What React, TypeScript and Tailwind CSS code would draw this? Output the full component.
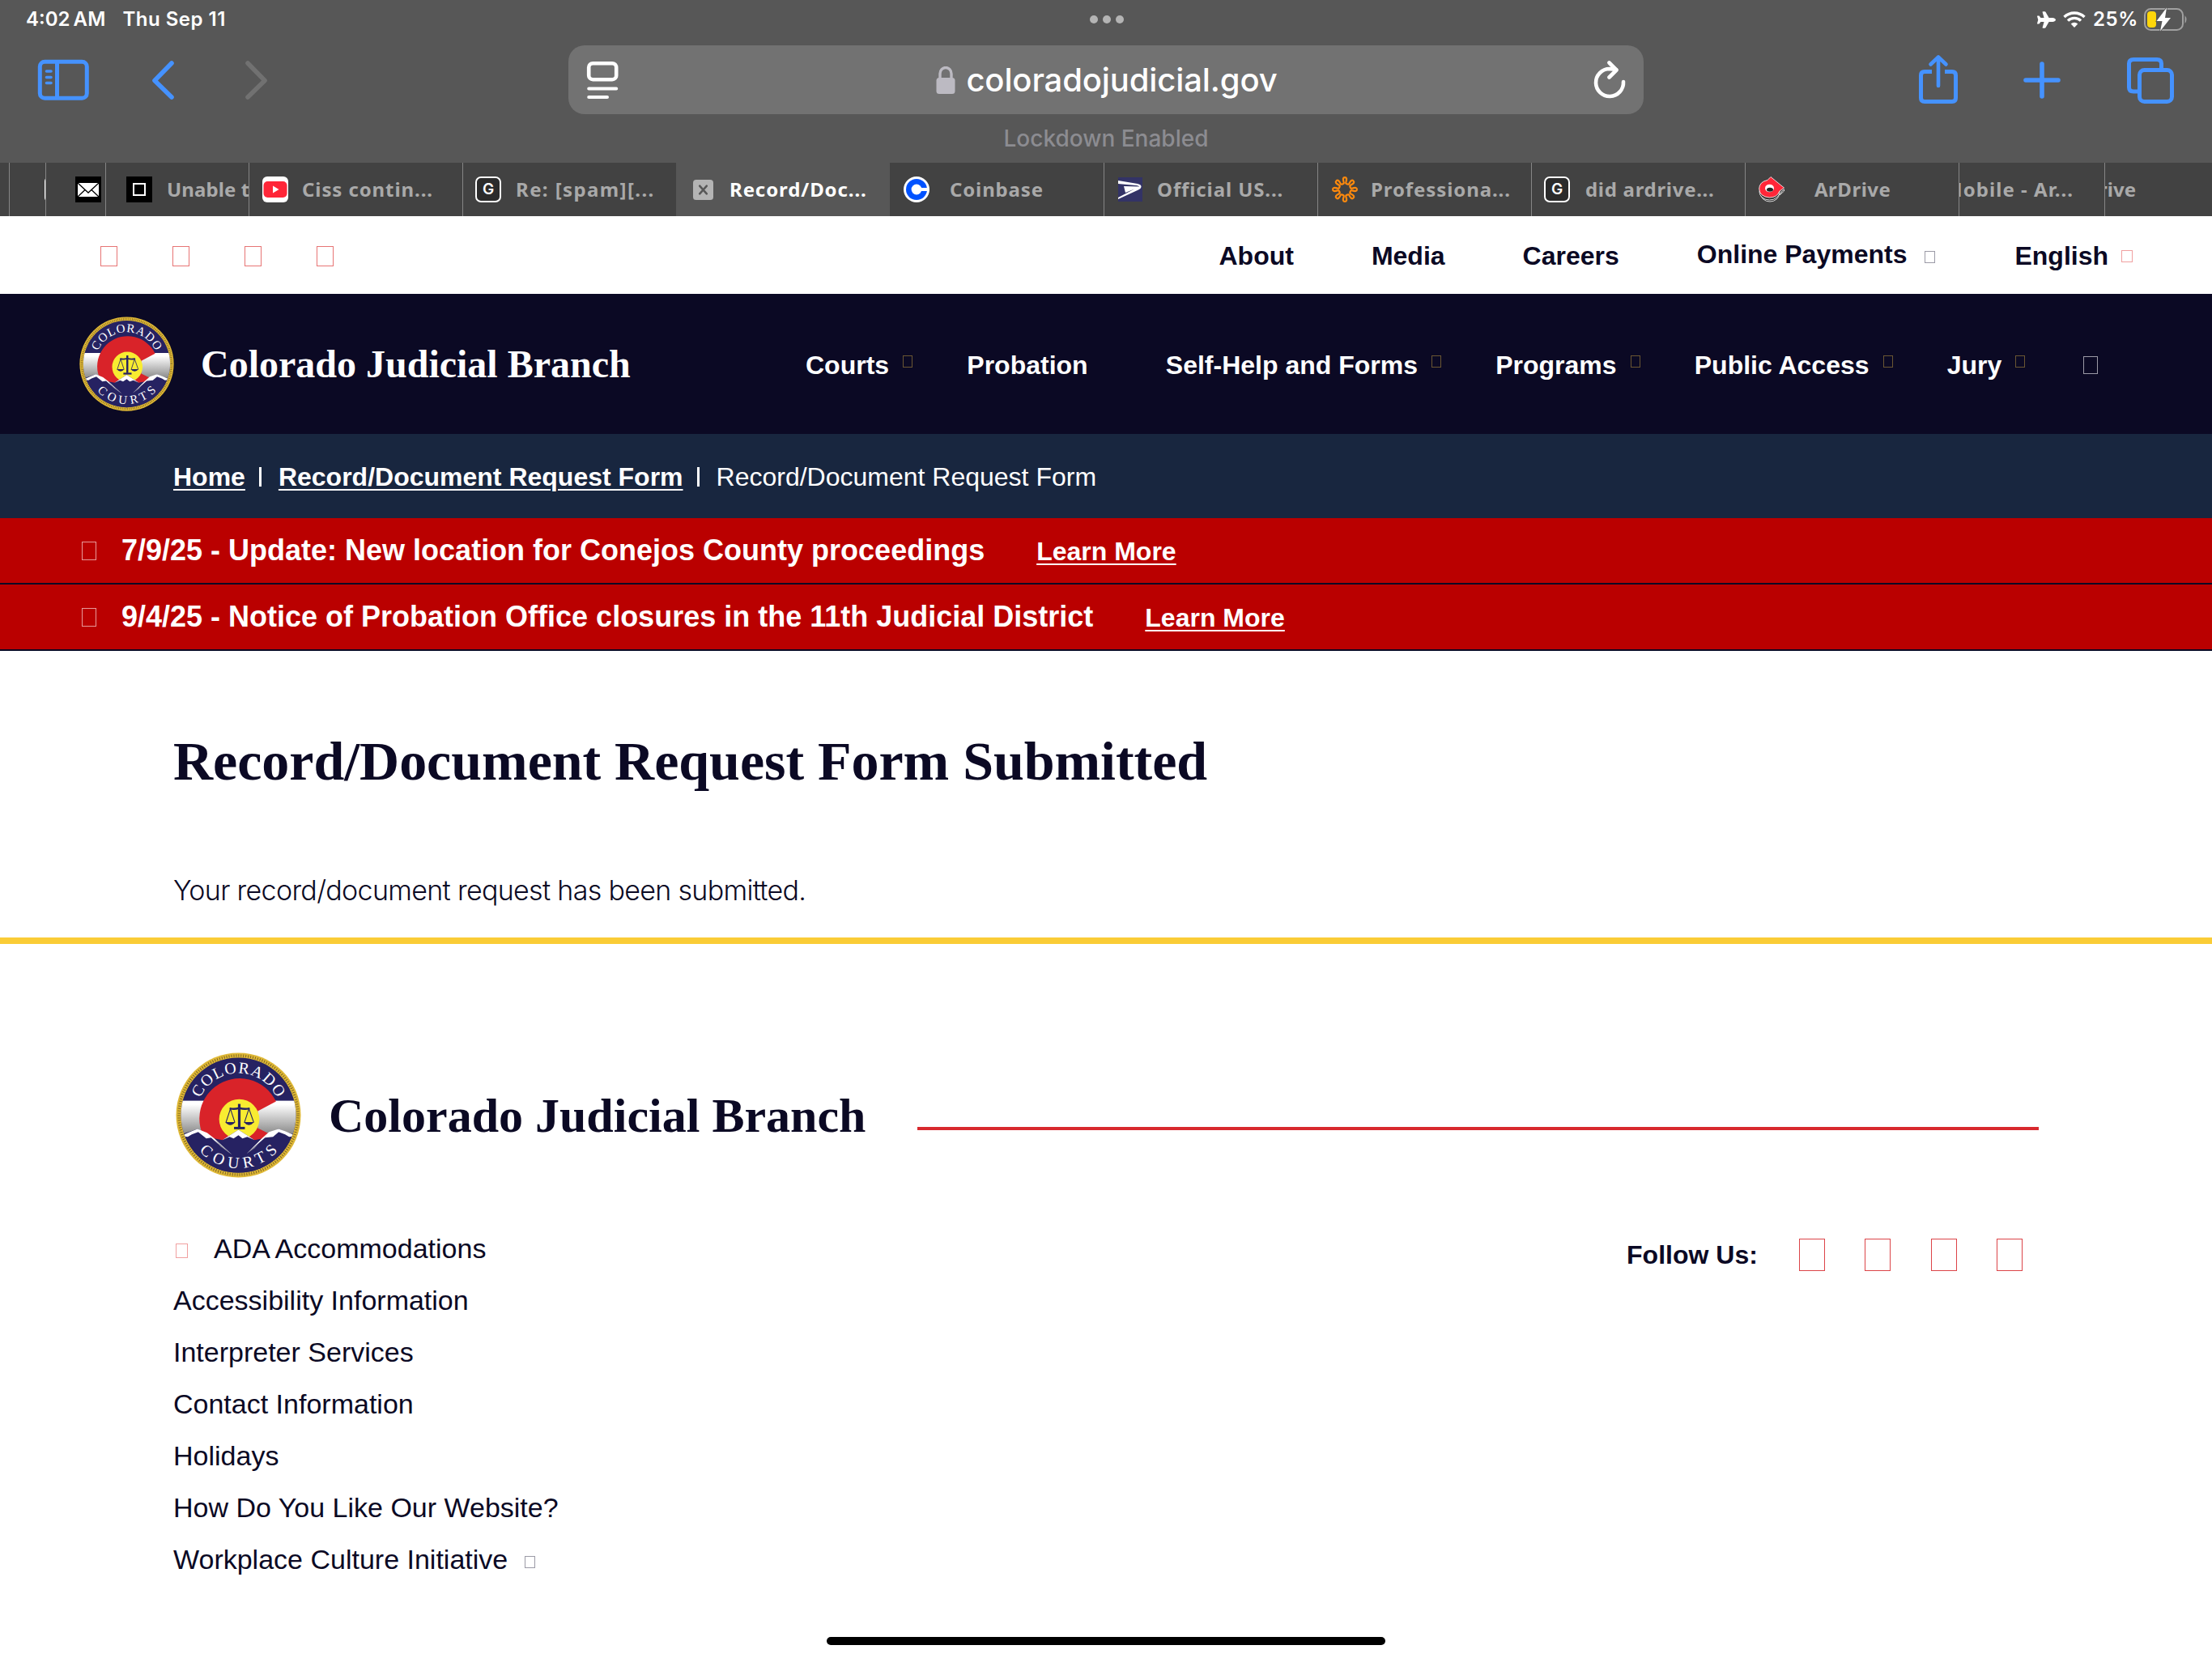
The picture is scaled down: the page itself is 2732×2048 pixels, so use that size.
import type { ReactNode } from "react";
import { FaPlane } from "react-icons/fa6";

const Missing = ({ className }: { className: string }) => (
    <span className={`block shrink-0 border ${className}`} />
);

const Seal = ({ id, className }: { id: string; className: string }) => (
    <svg viewBox="0 0 156 156" className={className}>
        <defs>
            <path id={`${id}-top`} d="M26.170 82 A52 52 0 1 1 129.830 82" />
            <path id={`${id}-bottom`} d="M12 78 A66 66 0 0 0 144 78" />
            <clipPath id={`${id}-clip`}><circle cx="78" cy="78" r="71.5" /></clipPath>
            <linearGradient id={`${id}-sky`} x1="0" y1="0" x2="0" y2="1">
                <stop offset="0.1" stopColor="#ffffff" />
                <stop offset="0.9" stopColor="#8d8d8d" />
            </linearGradient>
        </defs>
        <circle cx="78" cy="78" r="77.5" fill="#dfb836" />
        <circle cx="78" cy="78" r="74" fill="none" stroke="#7d6422" strokeWidth="3.400" strokeDasharray="1 2" />
        <g clipPath={`url(#${id}-clip)`}>
            <rect width="156" height="156" fill="#262262" />
            <rect y="60" width="156" height="45" fill={`url(#${id}-sky)`} />
            <path d="M124.700 61 A50 50 0 1 0 124 105 L102 94 L102 73 Z" fill="#d92329" />
            <circle cx="79" cy="83" r="25" fill="#f8ec31" />
            <path d="M0 104 L16 99 L27 95 L48 107 L58 109 L78 96 L98 109 L108 107 L128 95 L140 100 L156 104 V156 H0 Z" fill="#262262" />
            <path d="M6 104 L20 98 L27 95 L39 100 L48 107 L70 127 L52 113 L44 106 L38 107 L28 99 L20 102 L15 105 Z" fill="#fff" />
            <path d="M58 109 L78 96 L98 109 L89 105 L83 107 L78 103 L72 107 L67 105 Z" fill="#fff" />
            <path d="M150 104 L136 98 L128 95 L116 99 L107 107 L88 126 L103 113 L111 106 L121 105 L128 99 L136 102 L141 105 Z" fill="#fff" />
            <path d="M48 108 L70 127 L56 117 Z M104 112 L88 126 L98 119 Z" fill="#8f8e9c" />
        </g>
        <g fill="none" stroke="#262262" strokeWidth="2">
            <path d="M67 69.500 Q73 71 79 69 Q85 71 92 69.500" strokeWidth="2.400" />
            <path d="M79 64 V93" strokeWidth="3.200" />
            <path d="M72.500 94 H86" strokeWidth="3" />
            <path d="M68 70 L62.500 87 M68 70 L73.500 87 M91 70 L85.500 87 M91 70 L97 87" strokeWidth="1.100" />
        </g>
        <path d="M61.500 86.500 H74 Q68 94 61.500 86.500 Z M84.500 86.500 H97.500 Q91 94 84.500 86.500 Z" fill="#262262" />
        <text fill="#fff" fontFamily="Liberation Serif" fontSize="20">
            <textPath href={`#${id}-top`} startOffset="50%" textAnchor="middle" textLength="120">COLORADO</textPath>
        </text>
        <text fill="#fff" fontFamily="Liberation Serif" fontSize="20">
            <textPath href={`#${id}-bottom`} startOffset="50%" textAnchor="middle" textLength="110">COURTS</textPath>
        </text>
    </svg>
);

const StatusBar = () => (
    <div className="flex h-[48px] items-center justify-between pl-8 pr-[30px] text-[24px] font-semibold text-white">
        <div className="flex w-[600px]">
            <span>4:02</span>
            <span className="ml-[4px] w-[61px] tracking-[0.300px]">AM</span>
            <span className="tracking-[0.500px]">Thu Sep 11</span>
        </div>
        <div className="flex gap-[6px]">
            <span className="h-[10px] w-[10px] rounded-full bg-[#b4b4b4]" />
            <span className="h-[10px] w-[10px] rounded-full bg-[#b4b4b4]" />
            <span className="h-[10px] w-[10px] rounded-full bg-[#b4b4b4]" />
        </div>
        <div className="flex w-[600px] items-center justify-end">
            <FaPlane className="mr-[9px] text-[23px]" />
            <svg viewBox="0 0 28 20" className="mr-[9px] h-5 w-7" fill="none" stroke="#fff" strokeWidth="3.400">
                <path d="M1.500 7 A18 18 0 0 1 26.500 7" />
                <path d="M6 11.600 A11.500 11.500 0 0 1 22 11.600" />
                <path d="M14 20 L9.700 15.500 A6.200 6.200 0 0 1 18.300 15.500 Z" fill="#fff" stroke="none" />
            </svg>
            <span className="w-[63px] tracking-[0.600px]">25%</span>
            <svg viewBox="0 0 54 30" className="h-[30px] w-[54px]">
                <rect x="1" y="2" width="47" height="26" rx="7.500" fill="none" stroke="#a0a0a0" strokeWidth="2" />
                <path d="M50.500 10 Q54.500 15 50.500 20 Z" fill="#a0a0a0" />
                <rect x="4" y="5" width="11" height="20" rx="4" fill="#ffd60a" />
                <path d="M28 0.500 L15.500 17 H22.500 L20 29.500 L33 13 H26 Z" fill="#fff" stroke="#575757" strokeWidth="1.600" paintOrder="stroke" />
            </svg>
        </div>
    </div>
);

const Toolbar = () => (
    <div className="flex h-[99px] items-center justify-between px-[46px] text-[#4592ff]">
        <div className="flex w-[600px] items-center pt-[3px]">
            <svg viewBox="0 0 64 52" className="h-[52px] w-16" fill="none" stroke="currentColor" strokeWidth="5">
                <rect x="3.300" y="3.300" width="58" height="45" rx="6" />
                <path d="M24.500 4 V48" />
                <path d="M11.500 15 H17 M11.500 22.500 H17 M11.500 29.500 H17" strokeWidth="3.600" strokeLinecap="round" />
            </svg>
            <svg viewBox="0 0 30 50" className="ml-[76px] h-[50px] w-[30px]" fill="none" stroke="currentColor" strokeWidth="5.600" strokeLinecap="round" strokeLinejoin="round">
                <path d="M26 4 L5 25.500 L26 46" />
            </svg>
            <svg viewBox="0 0 30 50" className="ml-[86px] h-[50px] w-[30px]" fill="none" stroke="#717171" strokeWidth="5.600" strokeLinecap="round" strokeLinejoin="round">
                <path d="M4 4 L25 25.500 L4 46" />
            </svg>
        </div>
        <div className="mt-[2px] flex h-[85px] w-[1328px] items-center rounded-[20px] bg-[#727272] pl-[22px] pr-[20px] text-white">
            <svg viewBox="0 0 42 48" className="h-[48px] w-[42px]" fill="none" stroke="currentColor" strokeWidth="4.600" strokeLinecap="round">
                <rect x="3.200" y="3.200" width="34" height="20" rx="5" />
                <path d="M3.200 34.500 H37.200 M3.200 45 H26" strokeWidth="4" />
            </svg>
            <div className="flex flex-1 items-center justify-center pl-[2px]">
                <svg viewBox="0 0 24 34" className="mr-[13px] h-[34px] w-6">
                    <path d="M5 16 V9 A7 7.500 0 0 1 19 9 V16" fill="none" stroke="#bcbac2" strokeWidth="3.400" />
                    <rect x="0.500" y="14" width="23" height="20" rx="3.500" fill="#bcbac2" />
                </svg>
                <span className="text-[40px] font-medium tracking-[-0.120px]">coloradojudicial.gov</span>
            </div>
            <svg viewBox="0 0 44 48" className="h-[48px] w-[44px]" fill="none" stroke="currentColor" strokeWidth="4.600" strokeLinecap="round" strokeLinejoin="round">
                <path d="M39 26 A17 17 0 1 1 22 10 L30 11" />
                <path d="M21.500 2.500 L30.500 11.500 L21.500 20.500" />
            </svg>
        </div>
        <div className="flex w-[600px] items-center justify-end pt-[2px]">
            <svg viewBox="0 0 50 64" className="h-16 w-[50px]" fill="none" stroke="currentColor" strokeWidth="5" strokeLinecap="round" strokeLinejoin="round">
                <path d="M17 21.500 H8 Q3.500 21.500 3.500 26 V54 Q3.500 58.500 8 58.500 H42 Q46.500 58.500 46.500 54 V26 Q46.500 21.500 42 21.500 H33" strokeLinecap="butt" />
                <path d="M25 39 V4 M15.500 12.500 L25 3.500 L34.500 12.500" strokeWidth="4.600" />
            </svg>
            <svg viewBox="0 0 46 46" className="ml-[80px] h-[46px] w-[46px]" fill="none" stroke="currentColor" strokeWidth="5.600" strokeLinecap="round">
                <path d="M23 3 V43 M3 23 H43" />
            </svg>
            <svg viewBox="0 0 60 58" className="ml-[81px] h-[58px] w-[60px]" fill="none" stroke="currentColor" strokeWidth="5">
                <path d="M14.500 43 H9 Q3.500 43 3.500 38 V8.500 Q3.500 3.500 9 3.500 H38 Q43.500 3.500 43.500 8.500 V14" />
                <rect x="16.500" y="16.500" width="40" height="39" rx="6" />
            </svg>
        </div>
    </div>
);

const GIcon = () => (
    <span className="flex h-8 w-8 items-center justify-center rounded-[7px] border-2 border-white bg-[#2b2b2b] font-['Inter'] text-[19px] font-semibold text-white">G</span>
);

const Tab = ({ icon, label, className, textClass = "left-[65px] tracking-[0.900px]" }: { icon?: ReactNode; label: string; className: string; textClass?: string }) => (
    <div className={`relative h-full shrink-0 overflow-hidden whitespace-nowrap border-l border-[#858585] ${className}`}>
        <div className="absolute left-[15px] top-[17px]">{icon}</div>
        <span className={`absolute top-[16px] text-[24px] font-bold leading-[34px] ${textClass}`}>{label}</span>
    </div>
);

const petals = [0, 45, 90, 135, 180, 225, 270, 315];

const Tabs = () => (
    <div className="flex h-[66px] bg-[#424242] font-['Noto_Sans'] text-[#a9a9a9]">
        <div className="w-[11px]" />
        <div className="relative w-[46px] overflow-hidden border-l border-[#858585]">
            <span className="absolute left-[43px] top-[17px] h-8 w-8 rounded-[6px] border-2 border-white" />
        </div>
        <Tab className="w-[74px]" label="" icon={
            <svg viewBox="0 0 32 32" className="ml-[21px] h-8 w-8">
                <rect width="32" height="32" fill="#000" />
                <rect x="3" y="8" width="26" height="17" rx="1" fill="#fff" />
                <path d="M3 8 L16 20 L29 8 M3 25 L12 16.500 M29 25 L20 16.500" fill="none" stroke="#000" strokeWidth="1.300" />
            </svg>
        } />
        <Tab className="w-[177px]" label="Unable to" textClass="left-[75px] tracking-[0.100px]" icon={
            <span className="ml-[10px] flex h-8 w-8 items-center justify-center bg-black"><Missing className="h-4 w-4 border-2 border-white" /></span>
        } />
        <Tab className="w-[264px]" label="Ciss contin..." icon={
            <svg viewBox="0 0 32 32" className="ml-px h-8 w-8">
                <rect width="32" height="32" rx="6" fill="#fff" />
                <rect x="1.500" y="6" width="29" height="20" rx="5" fill="#ff2638" />
                <path d="M13 11.500 V20.500 L20.500 16 Z" fill="#fff" />
            </svg>
        } />
        <Tab className="w-[264px]" label="Re: [spam][..." textClass="left-[65px] tracking-[1.400px]" icon={<GIcon />} />
        <Tab className="w-[264px] border-[#575757]! bg-[#575757] text-white" label="Record/Doc..." icon={
            <svg viewBox="0 0 26 26" className="ml-[5px] mt-[4px] h-[25px] w-[25px]">
                <rect width="26" height="26" rx="4" fill="#b4b4b4" />
                <path d="M8.500 8 L17.500 18 M17.500 8 L8.500 18" stroke="#575757" strokeWidth="2.600" strokeLinecap="round" />
            </svg>
        } />
        <Tab className="w-[264px] border-[#424242]!" label="Coinbase" textClass="left-[73px] tracking-[0.850px]" icon={
            <svg viewBox="0 0 32 32" className="ml-px h-8 w-8">
                <circle cx="16" cy="16" r="16" fill="#fff" />
                <circle cx="16" cy="16" r="13" fill="#0052ff" />
                <circle cx="16" cy="16" r="6.400" fill="#fff" />
                <rect x="18" y="14" width="11.500" height="4" fill="#fff" />
            </svg>
        } />
        <Tab className="w-[264px]" label="Official US..." icon={
            <svg viewBox="0 0 30 30" className="ml-[2px] mt-px h-[30px] w-[30px]">
                <rect width="30" height="30" fill="#333366" />
                <path d="M0 4 L24 8 Q29 9 28.500 12 Q28 14.500 25 15.500 L0 27 V25 L20 14.500 L9 19 L7 11 L26 11.500 Q26 10.500 22 10 L0 8 Z" fill="#fff" />
            </svg>
        } />
        <Tab className="w-[264px]" label="Professiona..." icon={
            <svg viewBox="0 0 32 32" className="ml-[2px] h-8 w-8" fill="none" stroke="#ff8a0d" strokeWidth="2.200">
                {petals.map((angle) => (
                    <path key={angle} transform={`rotate(${angle} 16 16)`} d="M12.800 9.300 Q15.500 9 14.600 6.800 Q12.600 1.100 16 1.100 Q19.400 1.100 17.400 6.800 Q16.500 9 19.200 9.300" />
                ))}
            </svg>
        } />
        <Tab className="w-[264px]" label="did ardrive..." textClass="left-[66px] tracking-[0.700px]" icon={<GIcon />} />
        <Tab className="w-[264px]" label="ArDrive" textClass="left-[85px] tracking-[0.500px]" icon={
            <svg viewBox="0 0 32 32" className="ml-px h-8 w-8">
                <g stroke="#fff" strokeWidth="0.800">
                    <path d="M29 18 L31.500 16 V18 L26 23 Z" fill="#333" />
                    <ellipse cx="14" cy="21" rx="11.500" ry="10" fill="#333" />
                    <ellipse cx="13.500" cy="19" rx="12.500" ry="10" fill="#333" />
                    <path d="M11 4.500 L15 0.500 L31.500 14 L26 18 Q23 26 13.500 26 Q1 25 0.700 15 Q1 6.500 11 4.500 Z" fill="#ff2638" />
                </g>
                <ellipse cx="13.500" cy="14.500" rx="5.500" ry="4.800" fill="#fff" />
                <ellipse cx="14" cy="16.300" rx="4" ry="2.500" fill="#222" />
            </svg>
        } />
        <Tab className="w-[180px]" label="Mobile - Ar..." textClass="left-[-19px] tracking-[1.050px]" />
        <Tab className="w-[133px]" label="ArDrive" textClass="right-[94px]" />
    </div>
);

const TopLinks = () => (
    <div className="flex h-[96px] items-center justify-between pl-[124px] pr-[98px] pt-[2px] text-[32px] font-bold">
        <div className="flex gap-[68px]">
            {[1, 2, 3, 4].map((item) => <Missing key={item} className="h-[25px] w-[21px] border-[#e77474]" />)}
        </div>
        <div className="flex items-center">
            <span>About</span>
            <span className="ml-[96px]">Media</span>
            <span className="ml-[96px]">Careers</span>
            <span className="relative -top-[2px] ml-[96px]">Online Payments</span>
            <Missing className="ml-[22px] mt-[2px] h-[15px] w-[13px] border-[#9b9aa6]" />
            <span className="ml-[98px]">English</span>
            <Missing className="ml-[16px] h-[15px] w-[14px] border-[#f0a0a0]" />
        </div>
    </div>
);

const menu = [
    { name: "Courts", arrow: true },
    { name: "Probation", arrow: false },
    { name: "Self-Help and Forms", arrow: true },
    { name: "Programs", arrow: true },
    { name: "Public Access", arrow: true },
    { name: "Jury", arrow: true }
];

const Header = () => (
    <div className="flex h-[173px] items-center bg-[#0b0924] pl-[98px] text-white">
        <Seal id="head" className="h-[117px] w-[117px]" />
        <span className="ml-[33px] w-[747px] font-['Liberation_Serif'] text-[48px] font-bold">Colorado Judicial Branch</span>
        <div className="flex items-center pt-[2px] text-[32px] font-bold">
            {menu.map((item) => (
                <div key={item.name} className="mr-[67.200px] flex items-center">
                    <span>{item.name}</span>
                    {item.arrow ? <Missing className="mb-[8px] ml-[17px] h-[15px] w-[12px] border-[#6a5632]" /> : <span className="w-[29px]" />}
                </div>
            ))}
            <Missing className="ml-[4px] h-[22px] w-[18px] border-[#9c9aa6]" />
        </div>
    </div>
);

const Divider = () => <span className="ml-[17px] mr-[21px] h-6 w-[3px] bg-white" />;

const alerts = [
    "7/9/25 - Update: New location for Conejos County proceedings",
    "9/4/25 - Notice of Probation Office closures in the 11th Judicial District"
];

const footerLinks = [
    "Accessibility Information",
    "Interpreter Services",
    "Contact Information",
    "Holidays",
    "How Do You Like Our Website?",
    "Workplace Culture Initiative"
];

const App = () => {
    return (
        <div className="h-[2048px] w-[2732px] overflow-hidden bg-white font-['Liberation_Sans',sans-serif] text-[#0b0924]">
            <div className="h-[267px] bg-[#575757] font-['Inter',sans-serif]">
                <StatusBar />
                <Toolbar />
                <p className="h-[54px] pt-[4px] text-center text-[28px] font-medium leading-[40px] text-[#8c8c91]">Lockdown Enabled</p>
                <Tabs />
            </div>
            <TopLinks />
            <Header />
            <div className="flex h-[104px] items-center bg-[#18263f] pl-[214px] pt-[2px] text-[32px] text-white">
                <b className="underline decoration-2 underline-offset-4">Home</b>
                <Divider />
                <b className="underline decoration-2 underline-offset-4">Record/Document Request Form</b>
                <Divider />
                <span>Record/Document Request Form</span>
            </div>
            {alerts.map((text) => (
                <div key={text} className="flex h-[82px] items-center border-b-2 border-[#0b0924] bg-[#ba0000] pl-[101px] font-bold text-white">
                    <Missing className="h-[23px] w-[18px] border-[#e79a9a]" />
                    <span className="ml-[31px] text-[36px]">{text}</span>
                    <span className="ml-[64px] mt-px text-[32px] underline decoration-2 underline-offset-4">Learn More</span>
                </div>
            ))}
            <h1 className="ml-[214px] mt-[96px] font-['Liberation_Serif'] text-[68px] font-bold leading-[80px] tracking-[-0.040px]">Record/Document Request Form Submitted</h1>
            <p className="ml-[214px] mt-[96px] h-[82px] font-['Inter'] text-[34px] font-light leading-[48px] tracking-[-0.680px]">Your record/document request has been submitted.</p>
            <div className="h-2 bg-[#facc36]" />
            <div className="ml-[217px] mt-[133px] flex h-[156px] items-center">
                <Seal id="foot" className="h-[155px] w-[155px]" />
                <span className="ml-[34px] w-[727px] pt-[2px] font-['Liberation_Serif'] text-[60px] font-bold">Colorado Judicial Branch</span>
                <div className="mt-[34px] h-1 w-[1385px] bg-[#d8292e]" />
            </div>
            <div className="flex justify-between pl-[214px] pr-[234px] pt-[55px]">
                <div className="text-[34px] leading-[64px]">
                    <div className="flex items-center">
                        <Missing className="ml-[3px] mr-[32px] mt-[5px] h-[18px] w-[15px] border-[#f0a0a0]" />
                        <span>ADA Accommodations</span>
                    </div>
                    {footerLinks.map((link) => (
                        <div key={link} className="flex items-center">
                            <span>{link}</span>
                            {link.startsWith("Workplace") && <Missing className="ml-[21px] mt-[6px] h-[15px] w-[13px] border-[#9b9aa6]" />}
                        </div>
                    ))}
                </div>
                <div className="mt-[7px] flex h-[66px] items-center">
                    <b className="mr-[51px] text-[32px]">Follow Us:</b>
                    <div className="flex gap-[49.400px]">
                        {[1, 2, 3, 4].map((item) => <Missing key={item} className="h-[40px] w-[32px] border-[#dc4448]" />)}
                    </div>
                </div>
            </div>
            <div className="mx-auto mt-[64px] h-[10px] w-[690px] rounded-full bg-black" />
        </div>
    );
};

export default App;
